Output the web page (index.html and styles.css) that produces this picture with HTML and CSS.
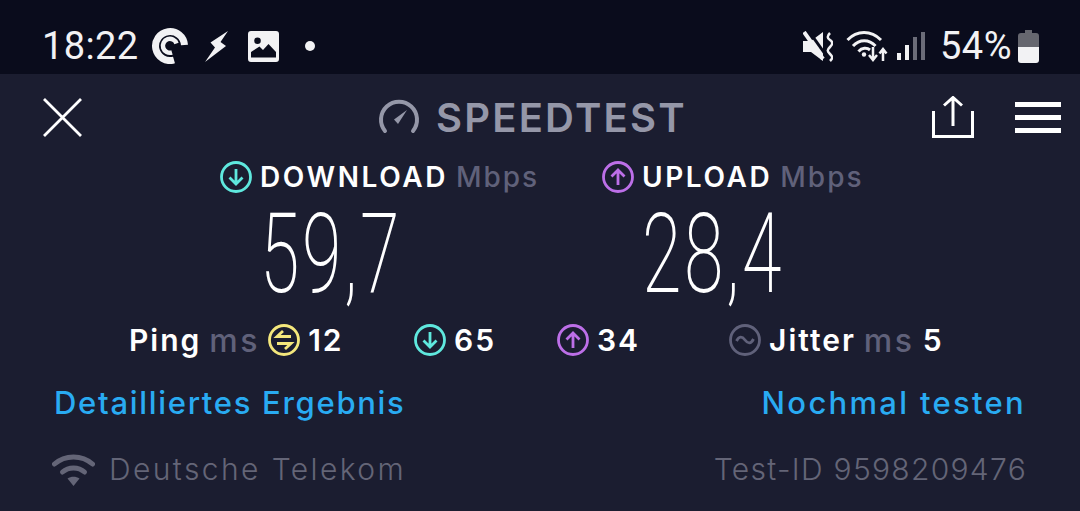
FILE: index.html
```html
<!DOCTYPE html>
<html lang="en">
<head>
  <meta charset="UTF-8" />
  <meta name="viewport" content="width=device-width, initial-scale=1.0"/>
  <title>Speedtest</title>
  <link rel="stylesheet" href="styles.css">
</head>
<body>
  <div class="statusbar">
    <span class="clock">18:22</span>
    <svg class="ic-app" viewBox="0 0 36 36"><g fill="none" stroke="#f2f2f4"><path d="M32.500 17A14.500 14.500 0 1 0 22 32" stroke-width="7"/><path d="M24.500 15.500A7 7 0 1 0 20 24.500" stroke-width="4.500"/></g></svg>
    <svg class="ic-bolt" viewBox="0 0 23 31"><path d="M23 0 5.500 11.500 10 16.500 0 31 21 15 15.500 11Z" fill="#f2f2f4"/></svg>
    <svg class="ic-image" viewBox="0 0 31 31"><path fill-rule="evenodd" d="M3 0H28A3 3 0 0 1 31 3V28A3 3 0 0 1 28 31H3A3 3 0 0 1 0 28V3A3 3 0 0 1 3 0ZM3 21V26.500H28V21L20.500 13 15 19 11.500 15.500ZM9.500 6.500A3.300 3.300 0 1 0 9.500 13.100 3.300 3.300 0 0 0 9.500 6.500Z" fill="#f2f2f4"/></svg>
    <span class="dot"></span>
    <svg class="ic-mute" viewBox="0 0 30 31"><path d="M0 10H8L20 1V30L8 21H0Z" fill="#f2f2f4"/><path d="M5 -1 25 27" stroke="#0a0c1c" stroke-width="3" fill="none"/><path d="M1 1 20 28" stroke="#f2f2f4" stroke-width="4" fill="none"/><path d="M27 2C24 5 24 7 27 9S30 13 27 16 24 20 27 23 30 27 27 30" fill="none" stroke="#f2f2f4" stroke-width="2.500"/></svg>
    <svg class="ic-wifi" viewBox="0 0 42 32"><g fill="none" stroke="#f2f2f4" stroke-width="3"><path d="M1.500 10C11 0 25 0 35 10"/><path d="M7 16C13.500 9 23 9 29.500 16"/><path d="M12.500 21.500C16 17.500 21 17.500 24 20"/></g><circle cx="18" cy="24.500" r="2.200" fill="#f2f2f4"/><path d="M27 17V29M23 25 27 30 31 25M37 31V20M33.500 23.500 37 19 40.500 23.500" fill="none" stroke="#f2f2f4" stroke-width="2.500"/></svg>
    <svg class="ic-signal" viewBox="0 0 28 28"><rect x="0" y="21" width="4" height="7" fill="#f2f2f4"/><rect x="8" y="13" width="4" height="15" fill="#f2f2f4"/><rect x="16" y="5" width="4" height="23" fill="#6b6c78"/><rect x="24" y="0" width="4" height="28" fill="#6b6c78"/></svg>
    <span class="battery-text">54%</span>
    <svg class="ic-battery" viewBox="0 0 21 33"><path d="M7 0H14V3H18A3 3 0 0 1 21 6V17H0V6A3 3 0 0 1 3 3H7Z" fill="#66676f"/><path d="M0 17H21V30A3 3 0 0 1 18 33H3A3 3 0 0 1 0 30Z" fill="#f2f2f4"/></svg>
  </div>

  <main>
    <header class="topbar">
      <svg class="ic-close" viewBox="0 0 39 39"><path d="M1 1 38 38M38 1 1 38" stroke="#fff" stroke-width="2.800" fill="none"/></svg>
      <div class="brand">
        <svg class="ic-gauge" viewBox="0 0 42 37"><path d="M7 32A18 18 0 1 1 35 32" fill="none" stroke="#9597a8" stroke-width="4" stroke-linecap="round"/><path d="M16 20.500 29 11 20 25Z" fill="#9597a8"/></svg>
        <span class="brand-name">SPEEDTEST</span>
      </div>
      <svg class="ic-share" viewBox="0 0 42 42"><path d="M1.500 15V40.500H40.500V15M21 30V2M12 9.500 21 1.500 30 9.500" fill="none" stroke="#fff" stroke-width="3"/></svg>
      <div class="menu"><span></span><span></span><span></span></div>
    </header>

    <section class="speeds">
      <div class="speed">
        <div class="speed-head">
          <svg class="circle teal" viewBox="0 0 32 32"><circle cx="16" cy="16" r="14.500"/><path d="M16 8V23M9.500 16.500 16 23 22.500 16.500"/></svg>
          <span class="label">DOWNLOAD</span> <span class="unit">Mbps</span>
        </div>
        <div class="speed-value">59,7</div>
      </div>
      <div class="speed">
        <div class="speed-head">
          <svg class="circle violet" viewBox="0 0 32 32"><circle cx="16" cy="16" r="14.500"/><path d="M16 24V9M9.500 15.500 16 9 22.500 15.500"/></svg>
          <span class="label">UPLOAD</span> <span class="unit">Mbps</span>
        </div>
        <div class="speed-value">28,4</div>
      </div>
    </section>

    <section class="stats">
      <div class="stat">
        <span class="label">Ping</span> <span class="unit">ms</span>
        <svg class="circle yellow" viewBox="0 0 32 32"><circle cx="16" cy="16" r="14.500"/><path d="M23 12.500H9L15 7M9 19.500H23L17 25"/></svg>
        <span class="label">12</span>
      </div>
      <div class="stat">
        <svg class="circle teal" viewBox="0 0 32 32"><circle cx="16" cy="16" r="14.500"/><path d="M16 8V23M9.500 16.500 16 23 22.500 16.500"/></svg>
        <span class="label">65</span>
      </div>
      <div class="stat">
        <svg class="circle violet" viewBox="0 0 32 32"><circle cx="16" cy="16" r="14.500"/><path d="M16 24V9M9.500 15.500 16 9 22.500 15.500"/></svg>
        <span class="label">34</span>
      </div>
      <div class="stat">
        <svg class="circle grey" viewBox="0 0 32 32"><circle cx="16" cy="16" r="14.500"/><path d="M7.500 17C10 12 13 12 16 16S22 20 24.500 15"/></svg>
        <span class="label">Jitter</span> <span class="unit">ms</span> <span class="label">5</span>
      </div>
    </section>

    <nav class="actions">
      <a href="#">Detailliertes Ergebnis</a>
      <a href="#" class="retest">Nochmal testen</a>
    </nav>

    <footer class="meta">
      <div class="carrier">
        <svg class="ic-carrier" viewBox="0 0 43 33"><g fill="none" stroke="#646577" stroke-width="5" stroke-linecap="round"><path d="M2.500 11C13 1.500 30 1.500 40.500 11"/><path d="M10.500 19C16.500 13.500 26.500 13.500 32.500 19"/></g><path d="M15.500 25.500C19 23 24 23 27.500 25.500L21.500 33Z" fill="#646577"/></svg>
        <span class="carrier-name">Deutsche Telekom</span>
      </div>
      <span class="test-id">Test-ID 9598209476</span>
    </footer>
  </main>
</body>
</html>
```

FILE: styles.css
```css
body {
  margin: 0;
  width: 1080px;
  height: 511px;
  overflow: hidden;
  background-color: #1b1d30;
  font-family: 'Inter', sans-serif;
}

/* Status bar */
.statusbar {
  display: flex;
  align-items: center;
  box-sizing: border-box;
  height: 74px;
  padding: 18px 41px 0 42px;
  background-color: #0a0c1c;
  color: #f2f2f4;
  font-family: 'Roboto', sans-serif;
}

.clock {
  font-size: 38px;
  letter-spacing: 0.400px;
  width: 95px;
}

.battery-text {
  font-size: 38px;
  letter-spacing: 0.500px;
  margin-left: 15px;
  width: 72px;
}

.ic-app { width: 36px; height: 36px; margin-left: 15px; }
.ic-bolt { width: 23px; height: 31px; margin-left: 17px; }
.ic-image { width: 31px; height: 31px; margin-left: 20px; }

.dot {
  width: 10px;
  height: 10px;
  margin-left: 26px;
  border-radius: 50%;
  background-color: #f2f2f4;
}

.ic-mute { width: 30px; height: 31px; margin-left: auto; }
.ic-wifi { width: 42px; height: 32px; margin-left: 13px; }
.ic-signal { width: 28px; height: 28px; margin-left: 9px; }
.ic-battery { width: 21px; height: 33px; margin-left: 6px; }

/* Top bar */
.topbar {
  display: flex;
  align-items: center;
  height: 86px;
  padding: 0 19px 0 43px;
}

.ic-close { width: 39px; height: 39px; }

.brand {
  display: flex;
  align-items: center;
  margin-left: 296px;
}

.ic-gauge { width: 42px; height: 37px; }

.brand-name {
  margin-left: 16px;
  font-size: 40px;
  font-weight: 600;
  letter-spacing: 2.200px;
  color: #9597a8;
}

.ic-share { width: 42px; height: 42px; margin-left: auto; }

.menu {
  display: flex;
  flex-direction: column;
  gap: 8px;
  width: 46px;
  margin-left: 41px;
}

.menu span {
  height: 5px;
  background-color: #fff;
}

/* Speeds */
.speeds {
  display: grid;
  grid-template-columns: 382px 1fr;
  padding-left: 220px;
}

.speed-head {
  display: flex;
  align-items: center;
  gap: 8px;
  height: 34px;
}

.speed-head .label { letter-spacing: 2.600px; }
.speed-head .unit { letter-spacing: 2px; }

.speed-value {
  height: 120px;
  margin-left: 40px;
  font-family: 'Roboto', sans-serif;
  font-size: 112px;
  font-weight: 200;
  line-height: 120px;
  letter-spacing: 4px;
  color: #fff;
  transform: scaleX(0.64);
  transform-origin: left center;
}

.label {
  font-size: 28px;
  font-weight: 600;
  color: #fff;
}

.unit {
  font-size: 28px;
  font-weight: 500;
  color: #60617a;
}

.circle {
  flex: none;
  width: 32px;
  height: 32px;
  fill: none;
  stroke-width: 2.800;
}

.circle.teal { stroke: #5fe8de; }
.circle.violet { stroke: #bd6fe8; }
.circle.yellow { stroke: #f4e77c; }
.circle.grey { stroke: #60617a; }

/* Ping row */
.stats {
  display: grid;
  grid-template-columns: 285px 143px 172px 1fr;
  height: 52px;
  padding-left: 129px;
}

.stat {
  display: flex;
  align-items: center;
  gap: 8px;
}

.stat .label { font-size: 30px; letter-spacing: 2px; }
.stat .unit { font-size: 32px; letter-spacing: 2.600px; }

/* Links */
.actions {
  display: flex;
  justify-content: space-between;
  align-items: center;
  height: 52px;
  margin-top: 10px;
  padding: 0 54px;
  font-size: 31px;
  font-weight: 500;
  letter-spacing: 1.700px;
}

.actions a {
  color: #29abf2;
  text-decoration: none;
}

.actions .retest { letter-spacing: 2.300px; }

.meta {
  display: flex;
  justify-content: space-between;
  align-items: center;
  height: 52px;
  margin-top: 15px;
  padding: 0 53px 0 52px;
  font-size: 30px;
  font-weight: 300;
  color: #646577;
}

.carrier {
  display: flex;
  align-items: center;
  gap: 14px;
}

.carrier-name { letter-spacing: 2.400px; }
.test-id { letter-spacing: 1.300px; }

.ic-carrier { width: 43px; height: 33px; }
```
